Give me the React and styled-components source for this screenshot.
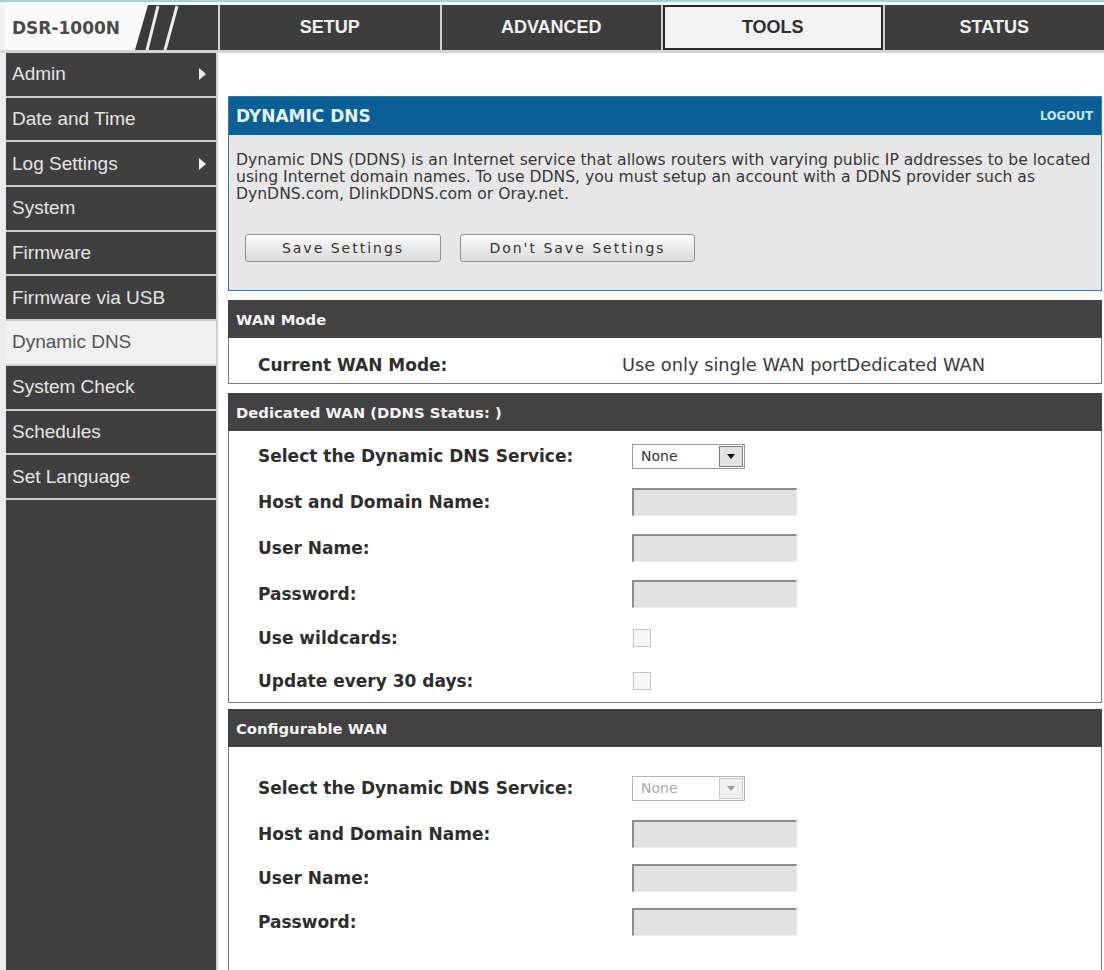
import React from "react";
import styled, { createGlobalStyle } from "styled-components";

const GlobalStyle = createGlobalStyle`
  html, body {
    margin: 0;
    padding: 0;
    background: #ffffff;
  }
  body {
    font-family: "DejaVu Sans", Verdana, sans-serif;
  }
`;

const tabs = [
  { label: "SETUP" },
  { label: "ADVANCED" },
  { label: "TOOLS", active: true },
  { label: "STATUS" },
];

const navItems = [
  { label: "Admin", arrow: true },
  { label: "Date and Time" },
  { label: "Log Settings", arrow: true },
  { label: "System" },
  { label: "Firmware" },
  { label: "Firmware via USB" },
  { label: "Dynamic DNS", active: true },
  { label: "System Check" },
  { label: "Schedules" },
  { label: "Set Language" },
];

const dedicatedRows = [
  { label: "Select the Dynamic DNS Service:", type: "select", h: 46 },
  { label: "Host and Domain Name:", type: "text", h: 46 },
  { label: "User Name:", type: "text", h: 46 },
  { label: "Password:", type: "text", h: 45 },
  { label: "Use wildcards:", type: "check", h: 43 },
  { label: "Update every 30 days:", type: "check", h: 43 },
];

const configurableRows = [
  { label: "Select the Dynamic DNS Service:", type: "select", h: 46, disabled: true },
  { label: "Host and Domain Name:", type: "text", h: 45 },
  { label: "User Name:", type: "text", h: 44 },
  { label: "Password:", type: "text", h: 44 },
];

const FieldControl = ({ row }) => {
  if (row.type === "select") {
    return (
      <SelectBox disabled={row.disabled}>
        <span>None</span>
        <SelectArrow disabled={row.disabled}>
          <svg width="8" height="5" viewBox="0 0 8 5">
            <path d="M0 0 L8 0 L4 5 Z" fill={row.disabled ? "#9a9a9a" : "#111"} />
          </svg>
        </SelectArrow>
      </SelectBox>
    );
  }
  if (row.type === "check") return <CheckBox />;
  return <TextBox type="text" readOnly />;
};

const FormSection = ({ title, rows, gap, pad, open }) => (
  <Section gap={gap} open={open}>
    <SectionHead>{title}</SectionHead>
    <SectionBody pad={pad} open={open}>
      {rows.map((row) => (
        <Row key={row.label} h={row.h} labelWidth={374}>
          <Label>{row.label}</Label>
          <FieldControl row={row} />
        </Row>
      ))}
    </SectionBody>
  </Section>
);

const App = () => {
  return (
    <>
      <GlobalStyle />
      <Page>
        <Header>
          <Brand>
            <BrandName>DSR-1000N</BrandName>
            <Slashes width="48" height="45" viewBox="0 0 48 45">
              <line x1="23" y1="1" x2="12" y2="45" stroke="#ededed" strokeWidth="3" />
              <line x1="42" y1="1" x2="30" y2="45" stroke="#ededed" strokeWidth="3" />
            </Slashes>
          </Brand>
          {tabs.map((t) => (
            <Tab key={t.label} active={t.active}>
              {t.label}
            </Tab>
          ))}
        </Header>

        <Layout>
          <SideNav>
            {navItems.map((item) => (
              <NavItem key={item.label} active={item.active}>
                {item.label}
                {item.arrow && <NavArrow />}
              </NavItem>
            ))}
          </SideNav>

          <Content>
            <InfoPanel>
              <PanelHead>
                <PanelTitle>DYNAMIC DNS</PanelTitle>
                <Logout>LOGOUT</Logout>
              </PanelHead>
              <PanelBody>
                Dynamic DNS (DDNS) is an Internet service that allows routers with varying public IP addresses to be located
                <br />
                using Internet domain names. To use DDNS, you must setup an account with a DDNS provider such as
                <br />
                DynDNS.com, DlinkDDNS.com or Oray.net.
                <ButtonRow>
                  <ActionButton width={196}>Save Settings</ActionButton>
                  <ActionButton width={235}>Don't Save Settings</ActionButton>
                </ButtonRow>
              </PanelBody>
            </InfoPanel>

            <Section>
              <SectionHead>WAN Mode</SectionHead>
              <SectionBody pad={8}>
                <Row h={37} labelWidth={364}>
                  <Label>Current WAN Mode:</Label>
                  <Value>Use only single WAN portDedicated WAN</Value>
                </Row>
              </SectionBody>
            </Section>

            <FormSection title="Dedicated WAN (DDNS Status: )" rows={dedicatedRows} pad={2} />
            <FormSection title="Configurable WAN" rows={configurableRows} gap={6} pad={18} open />
          </Content>
        </Layout>
      </Page>
    </>
  );
};

export default App;

const Page = styled.div`
  display: flex;
  flex-direction: column;
  height: 100vh;
  overflow: hidden;
  box-sizing: border-box;
  border-top: 2px solid #a3d2de;
  padding-top: 3px;
`;

const Header = styled.div`
  display: grid;
  grid-template-columns: 218px repeat(4, 1fr);
  column-gap: 2px;
  flex-shrink: 0;
  height: 45px;
  background: #cfcfcf;
  border-bottom: 3px solid #d4d4d4;
`;

const Brand = styled.div`
  display: flex;
  align-items: stretch;
  background: #3b3b3b;
  border-left: 5px solid #f2f2f2;
  overflow: hidden;
`;

const BrandName = styled.div`
  display: flex;
  align-items: center;
  width: 143px;
  box-sizing: border-box;
  padding-left: 7px;
  background: #fafafa;
  clip-path: polygon(0 0, 100% 0, calc(100% - 13px) 100%, 0 100%);
  font-family: "DejaVu Sans", Verdana, sans-serif;
  font-weight: bold;
  font-size: 17px;
  color: #4a4a4a;
`;

const Slashes = styled.svg`
  margin-left: -13px;
  flex-shrink: 0;
`;

const Tab = styled.div`
  display: flex;
  align-items: center;
  justify-content: center;
  background: ${(p) => (p.active ? "#f2f2f2" : "#3d3d3d")};
  color: ${(p) => (p.active ? "#2e2e2e" : "#f0f0f0")};
  box-shadow: ${(p) => (p.active ? "inset 0 0 0 2px #2a2a2a" : "none")};
  font-family: "Liberation Sans", Arial, sans-serif;
  font-weight: bold;
  font-size: 18px;
`;

const Layout = styled.div`
  display: grid;
  grid-template-columns: 218px 1fr;
  flex: 1;
  min-height: 0;
`;

const SideNav = styled.div`
  display: flex;
  flex-direction: column;
  background: #414141;
  border-left: 6px solid #ececec;
  border-right: 2px solid #cfcfcf;
`;

const NavItem = styled.div`
  display: flex;
  align-items: center;
  flex-shrink: 0;
  height: 42.7px;
  padding-left: 6px;
  border-bottom: 2px solid #cdcdcd;
  background: ${(p) => (p.active ? "#f0f0f0" : "#3f3f3f")};
  color: ${(p) => (p.active ? "#555555" : "#e4e4e4")};
  font-family: "Liberation Sans", Arial, sans-serif;
  font-size: 19px;
`;

const NavArrow = styled.span`
  margin-left: auto;
  margin-right: 10px;
  width: 0;
  height: 0;
  border-left: 7px solid #f0f0f0;
  border-top: 6px solid transparent;
  border-bottom: 6px solid transparent;
`;

const Content = styled.div`
  display: flex;
  flex-direction: column;
  padding: 43px 2px 0 10px;
  min-height: 0;
`;

const InfoPanel = styled.div`
  border: 1px solid #3b78a6;
`;

const PanelHead = styled.div`
  display: flex;
  align-items: center;
  justify-content: space-between;
  height: 38px;
  padding: 0 8px 0 7px;
  background: #0a5f97;
`;

const PanelTitle = styled.div`
  font-weight: bold;
  font-size: 17px;
  color: #e3f4fb;
`;

const Logout = styled.div`
  font-weight: bold;
  font-size: 11.5px;
  color: #c4e6f5;
`;

const PanelBody = styled.div`
  padding: 17px 8px 28px 7px;
  background: #e7e7e7;
  font-size: 15.6px;
  line-height: 17px;
  color: #383838;
  white-space: nowrap;
`;

const ButtonRow = styled.div`
  display: flex;
  gap: 19px;
  margin: 31px 0 0 9px;
`;

const ActionButton = styled.button`
  width: ${(p) => p.width}px;
  height: 28px;
  padding: 0;
  border: 1px solid #8f8f8f;
  border-radius: 3px;
  background: linear-gradient(#fbfbfb, #dadada);
  font-family: "DejaVu Sans", Verdana, sans-serif;
  font-size: 14px;
  letter-spacing: 2px;
  color: #333333;
`;

const Section = styled.div`
  display: flex;
  flex-direction: column;
  flex-shrink: 0;
  margin-top: ${(p) => p.gap ?? 9}px;
  ${(p) => (p.open ? "flex: 1; min-height: 0;" : "")}
`;

const SectionHead = styled.div`
  display: flex;
  align-items: center;
  flex-shrink: 0;
  height: 38px;
  padding-left: 8px;
  background: #424242;
  font-weight: bold;
  font-size: 14.8px;
  color: #f3f3f3;
`;

const SectionBody = styled.div`
  padding: ${(p) => p.pad ?? 4}px 0 0 29px;
  background: #ffffff;
  border: 1px solid #7a7a7a;
  border-top: none;
  ${(p) => (p.open ? "flex: 1; border-bottom: none;" : "")}
`;

const Row = styled.div`
  display: grid;
  grid-template-columns: ${(p) => p.labelWidth}px 1fr;
  align-items: center;
  height: ${(p) => p.h}px;
`;

const Label = styled.div`
  font-weight: bold;
  font-size: 17px;
  color: #2e2e2e;
`;

const Value = styled.div`
  font-size: 17.8px;
  color: #3a3a3a;
`;

const TextBox = styled.input`
  width: 165px;
  height: 28px;
  box-sizing: border-box;
  margin: 0;
  padding: 0;
  background: #e1e1e1;
  border-top: 2px solid #8d8d8d;
  border-left: 2px solid #8d8d8d;
  border-right: 1px solid #e9e9e9;
  border-bottom: 1px solid #ececec;
  outline: none;
`;

const SelectBox = styled.div`
  display: flex;
  align-items: center;
  width: 113px;
  height: 25px;
  box-sizing: border-box;
  padding-left: 8px;
  border: 1px solid ${(p) => (p.disabled ? "#b5b5b5" : "#9a9a9a")};
  background: #ffffff;
  font-size: 14px;
  color: ${(p) => (p.disabled ? "#a8a8a8" : "#333333")};
`;

const SelectArrow = styled.div`
  display: flex;
  align-items: center;
  justify-content: center;
  margin-left: auto;
  width: 24px;
  height: 21px;
  margin-right: 1px;
  box-sizing: border-box;
  border: 1px solid ${(p) => (p.disabled ? "#c8c8c8" : "#7d7d7d")};
  background: ${(p) => (p.disabled ? "#f1f1f1" : "#e2e2e2")};
`;

const CheckBox = styled.div`
  width: 18px;
  height: 18px;
  margin-left: 1px;
  box-sizing: border-box;
  border: 1px solid #c4c4c4;
  background: #f7f7f7;
`;
